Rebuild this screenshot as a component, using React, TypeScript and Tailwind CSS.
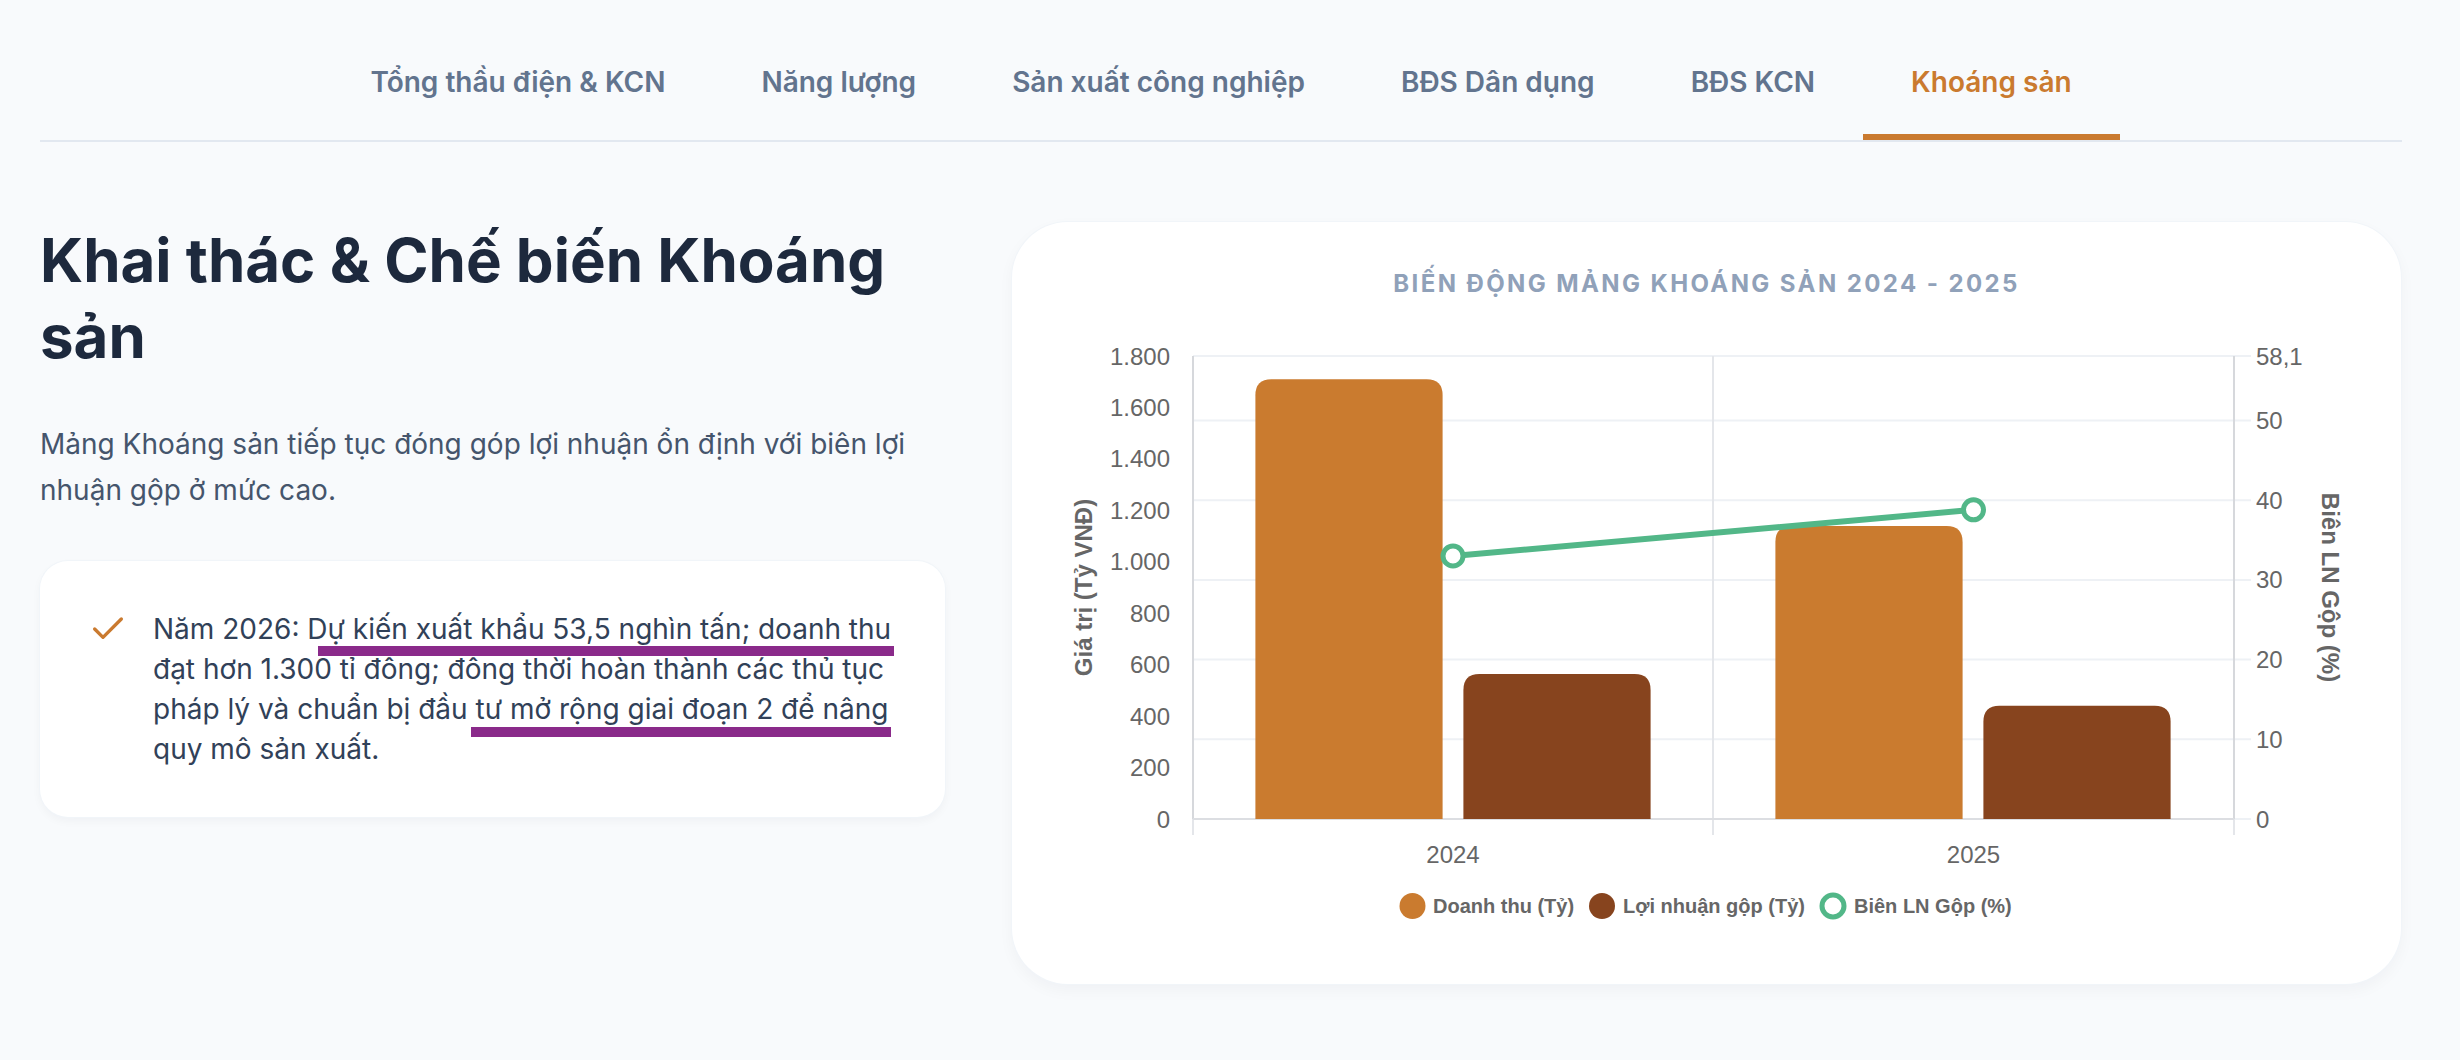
import { Check } from 'lucide-react';

const TABS = [
  'Tổng thầu điện & KCN',
  'Năng lượng',
  'Sản xuất công nghiệp',
  'BĐS Dân dụng',
  'BĐS KCN',
  'Khoáng sản',
];

const ACTIVE = 'Khoáng sản';

// chart geometry (svg space)
const L = 181;
const R = 1222;
const T = 36;
const B = 499;
const yL = (v: number) => B - (v * (B - T)) / 1800;
const yR = (v: number) => B - (v * (B - T)) / 58.1;

const BARS = [
  { x: 243.4, v: 1710, color: '#CA7B2F' },
  { x: 451.4, v: 564, color: '#87441E' },
  { x: 763.4, v: 1139, color: '#CA7B2F' },
  { x: 971.4, v: 440, color: '#87441E' },
];
const BAR_W = 187.2;

function barPath(x: number, top: number, w: number, r: number) {
  return `M${x},${B} V${top + r} Q${x},${top} ${x + r},${top} H${x + w - r} Q${x + w},${top} ${x + w},${top + r} V${B} Z`;
}

const FONT = "'Liberation Sans', Arial, sans-serif";

function MineralChart() {
  const leftTicks = [0, 200, 400, 600, 800, 1000, 1200, 1400, 1600, 1800];
  const rightTicks = [0, 10, 20, 30, 40, 50];
  const p1 = { x: 441, y: yR(33) };
  const p2 = { x: 961.5, y: yR(38.8) };

  return (
    <svg width="1389" height="620" viewBox="0 0 1389 620" className="block">
      {/* horizontal grid (right axis) */}
      {[...rightTicks, 58.1].map((t) => (
        <line key={t} x1={L} x2={1239} y1={yR(t)} y2={yR(t)} stroke="#eef1f5" strokeWidth="2" />
      ))}
      {/* vertical grid */}
      {[L, 701, R].map((x) => (
        <line key={x} x1={x} x2={x} y1={T} y2={515} stroke="#e4e6ea" strokeWidth="2" />
      ))}
      <line x1={L} x2={L} y1={T} y2={B} stroke="#d6d8dc" strokeWidth="2" />
      <line x1={R} x2={R} y1={T} y2={B} stroke="#d6d8dc" strokeWidth="2" />
      <line x1={L} x2={R} y1={B} y2={B} stroke="#dcdee2" strokeWidth="2" />

      {BARS.map((b, i) => (
        <path key={i} d={barPath(b.x, yL(b.v), BAR_W, 16)} fill={b.color} />
      ))}

      <line x1={p1.x} y1={p1.y} x2={p2.x} y2={p2.y} stroke="#52B788" strokeWidth="6" />
      {[p1, p2].map((p, i) => (
        <circle key={i} cx={p.x} cy={p.y} r="10" fill="#fff" stroke="#52B788" strokeWidth="5" />
      ))}

      <g fontFamily={FONT} fontSize="24" fill="#666">
        {leftTicks.map((t) => (
          <text key={t} x={158} y={yL(t) + 8.5} textAnchor="end">
            {t.toLocaleString('de-DE')}
          </text>
        ))}
        {rightTicks.map((t) => (
          <text key={t} x={1244} y={yR(t) + 8.5}>
            {t}
          </text>
        ))}
        <text x={1244} y={T + 8.5}>58,1</text>
        <text x={441} y={542.7} textAnchor="middle">2024</text>
        <text x={961.5} y={542.7} textAnchor="middle">2025</text>
      </g>

      <g fontFamily={FONT} fontSize="24" fontWeight="bold" fill="#666">
        <text transform="translate(80,267.5) rotate(-90)" textAnchor="middle">
          Giá trị (Tỷ VNĐ)
        </text>
        <text transform="translate(1310,267.5) rotate(90)" textAnchor="middle">
          Biên LN Gộp (%)
        </text>
      </g>

      {/* legend */}
      <g fontFamily={FONT} fontSize="20" fontWeight="bold" fill="#666">
        <circle cx={400.5} cy={586} r="13" fill="#CA7B2F" />
        <text x={421} y={593}>Doanh thu (Tỷ)</text>
        <circle cx={590} cy={586} r="13" fill="#87441E" />
        <text x={611} y={593}>Lợi nhuận gộp (Tỷ)</text>
        <circle cx={821} cy={586} r="11" fill="#fff" stroke="#52B788" strokeWidth="5" />
        <text x={842} y={593}>Biên LN Gộp (%)</text>
      </g>
    </svg>
  );
}

export default function App() {
  return (
    <div className="min-h-screen w-full bg-slate-50 font-['Inter',sans-serif]">
      <div className="w-[2362px] ml-[40px] pt-[30px]">
        {/* Tabs */}
        <nav className="flex justify-center border-b-2 border-slate-200">
          {TABS.map((tab) => (
            <button
              key={tab}
              className={
                tab === ACTIVE
                  ? 'px-[48px] py-[32px] border-b-[6px] border-[#CA7A2F] text-[28px] leading-[40px] font-semibold text-[#CA7A2F]'
                  : 'px-[48px] py-[32px] border-b-[6px] border-transparent text-[28px] leading-[40px] font-semibold text-slate-500'
              }
            >
              {tab}
            </button>
          ))}
        </nav>

        <div className="mt-[80px] flex items-start gap-[67px]">
          {/* Left column */}
          <div className="w-[905px] shrink-0">
            <h2 className="text-[60px] leading-[76px] font-bold text-slate-800">
              Khai thác &amp; Chế biến Khoáng sản
            </h2>
            <p className="mt-[48px] text-[28px] leading-[45.5px] text-slate-600">
              Mảng Khoáng sản tiếp tục đóng góp lợi nhuận ổn định với biên lợi nhuận gộp ở mức cao.
            </p>

            <div className="mt-[48px] rounded-[28px] bg-white p-[48px] shadow-[0_0_0_1px_#f1f5f9,0_4px_10px_rgba(15,23,42,0.04)]">
              <div className="flex items-start gap-[25px]">
                <Check className="w-[40px] h-[40px] shrink-0 text-[#CA7A2F]" strokeWidth={2} />
                <div className="relative text-[28px] leading-[40px] text-slate-700">
                  Năm 2026: Dự kiến xuất khẩu 53,5 nghìn tấn; doanh thu đạt hơn 1.300 tỉ đồng; đồng thời hoàn thành các thủ tục pháp lý và chuẩn bị đầu tư mở rộng giai đoạn 2 để nâng quy mô sản xuất.
                  <span className="absolute left-[165px] top-[37px] w-[576px] h-[10px] bg-[#8A2A8A]" />
                  <span className="absolute left-[318px] top-[118px] w-[420px] h-[10px] bg-[#8A2A8A]" />
                </div>
              </div>
            </div>
          </div>

          {/* Chart card */}
          <div className="w-[1389px] shrink-0 rounded-[56px] bg-white pt-[46px] pb-[44px] shadow-[0_0_0_1px_#f1f5f9,0_6px_16px_rgba(15,23,42,0.04)]">
            <h3 className="text-center text-[24px] leading-[32px] font-bold uppercase tracking-[0.1em] text-slate-400">
              Biến động mảng Khoáng sản 2024 - 2025
            </h3>
            <div className="mt-[20px]">
              <MineralChart />
            </div>
          </div>
        </div>
      </div>
    </div>
  );
}
